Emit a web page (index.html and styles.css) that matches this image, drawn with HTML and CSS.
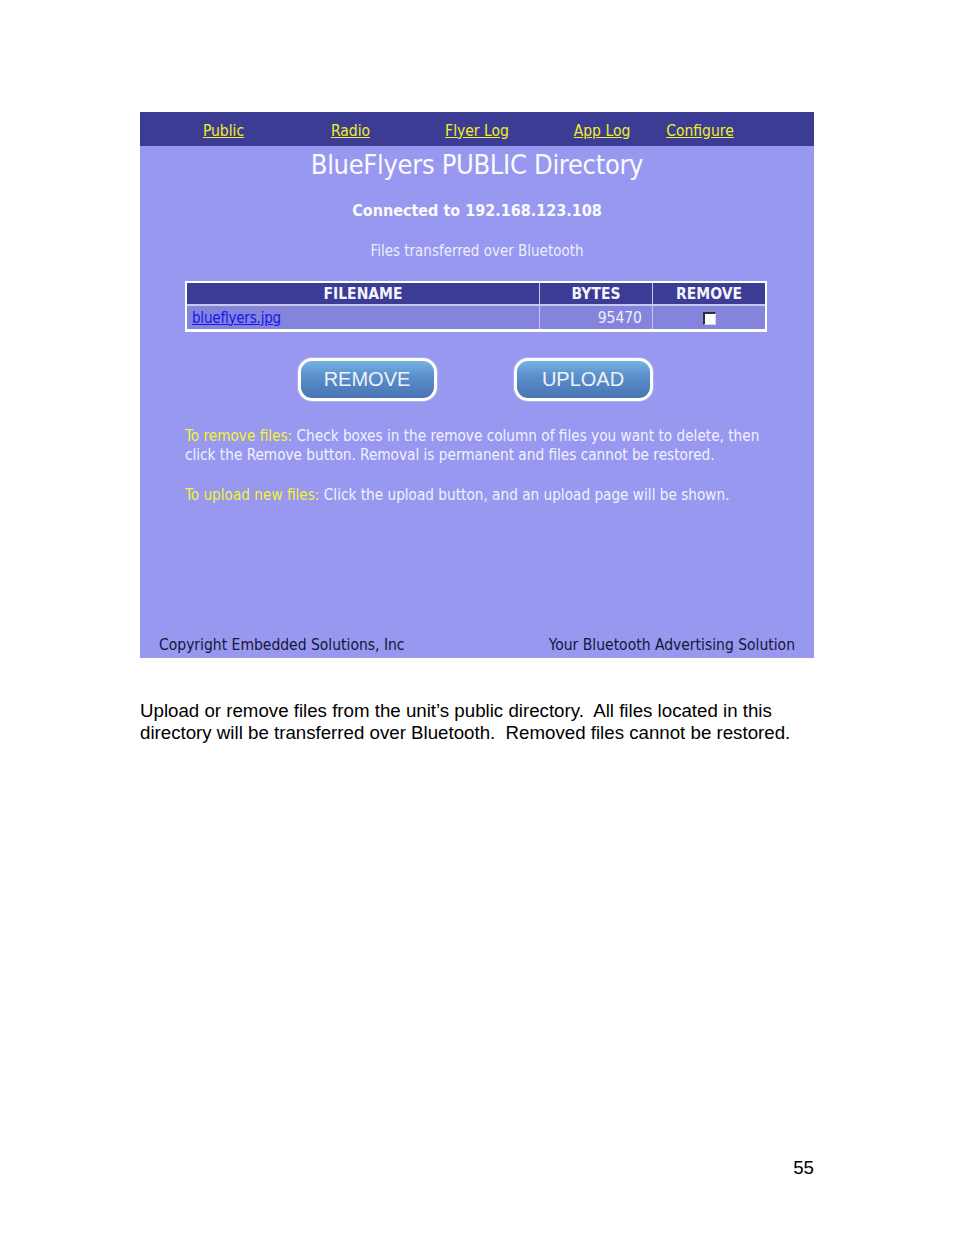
FILE: index.html
```html
<!DOCTYPE html>
<html>
<head>
<meta charset="utf-8">
<link rel="stylesheet" href="styles.css">
</head>
<body>
<div class="page">
  <div class="panel">
    <nav class="nav">
      <a href="#" class="nav-link">Public</a>
      <a href="#" class="nav-link">Radio</a>
      <a href="#" class="nav-link">Flyer Log</a>
      <a href="#" class="nav-link">App Log</a>
      <a href="#" class="nav-link">Configure</a>
    </nav>
    <h1 class="title">BlueFlyers PUBLIC Directory</h1>
    <div class="connected">Connected to 192.168.123.108</div>
    <div class="subtitle">Files transferred over Bluetooth</div>
    <table class="files">
      <colgroup>
        <col class="c-name">
        <col class="c-bytes">
        <col class="c-remove">
      </colgroup>
      <thead>
        <tr><th>FILENAME</th><th>BYTES</th><th>REMOVE</th></tr>
      </thead>
      <tbody>
        <tr>
          <td><a href="#" class="file-link">blueflyers.jpg</a></td>
          <td class="num">95470</td>
          <td class="center"><span class="check"></span></td>
        </tr>
      </tbody>
    </table>
    <div class="buttons">
      <button class="btn">REMOVE</button>
      <button class="btn">UPLOAD</button>
    </div>
    <p class="help"><span class="label">To remove files:</span> Check boxes in the remove column of files you want to delete, then click the Remove button. Removal is permanent and files cannot be restored.</p>
    <p class="help"><span class="label">To upload new files:</span> Click the upload button, and an upload page will be shown.</p>
    <div class="spacer"></div>
    <footer class="footer">
      <span>Copyright Embedded Solutions, Inc</span>
      <span>Your Bluetooth Advertising Solution</span>
    </footer>
  </div>
  <p class="desc">Upload or remove files from the unit’s public directory.&nbsp; All files located in this directory will be transferred over Bluetooth.&nbsp; Removed files cannot be restored.</p>
  <div class="pagenum">55</div>
</div>
</body>
</html>
```

FILE: styles.css
```css
html, body {
  margin: 0;
  padding: 0;
  background: #ffffff;
}

.page {
  width: 674px;
  margin-left: 140px;
  padding-top: 112px;
  display: flex;
  flex-direction: column;
}

.panel {
  background: #9898f0;
  height: 546px;
  display: flex;
  flex-direction: column;
  font-family: "DejaVu Sans Condensed", "DejaVu Sans", sans-serif;
  color: #f4f4ff;
}

.nav {
  background: #3c3c94;
  height: 34px;
  box-sizing: border-box;
  padding-top: 3px;
  display: grid;
  grid-template-columns: 127px 127px 126px 124px 72px;
  padding-left: 20px;
  align-items: center;
  justify-items: center;
}

.nav-link {
  color: #f0f020;
  font-size: 15.5px;
}

.title {
  margin: 2px 0 0 0;
  text-align: center;
  font-weight: normal;
  font-size: 27px;
  letter-spacing: -0.3px;
  line-height: 34px;
  color: #fbfbff;
}

.connected {
  text-align: center;
  font-weight: bold;
  font-size: 16px;
  margin-top: 20px;
  line-height: 18px;
  color: #fbfbff;
}

.subtitle {
  text-align: center;
  font-size: 15px;
  margin-top: 22px;
  line-height: 18px;
  color: #eeeeff;
}

.files {
  margin-top: 21px;
  margin-left: 45px;
  width: 582px;
  table-layout: fixed;
  border-collapse: separate;
  border-spacing: 0;
  border: 2px solid #ffffff;
  border-bottom-width: 3px;
  font-size: 15.5px;
}

.c-name { width: 352px; }
.c-bytes { width: 113px; }
.c-remove { width: 113px; }

.files th {
  background: #3c3c94;
  color: #f4f4ff;
  font-weight: bold;
  height: 21px;
  padding: 0;
  text-align: center;
  border-left: 1px solid #c8c8ee;
  border-bottom: 2px solid #c8c8ee;
}

.files td {
  background: #8484dc;
  height: 23px;
  padding: 0 5px;
  border-left: 1px solid #c8c8ee;
  color: #eeeeff;
}

.files th:first-child,
.files td:first-child {
  border-left: none;
}

.num { text-align: right; padding-right: 10px !important; }
.center { text-align: center; }

.file-link {
  color: #1616ee;
  font-size: 15px;
  letter-spacing: -0.2px;
}

.check {
  display: inline-block;
  box-sizing: border-box;
  width: 13px;
  height: 13px;
  background: #ffffff;
  border: 2px solid #303030;
  border-right: 1px solid #d8d8d8;
  border-bottom: 1px solid #d8d8d8;
  vertical-align: middle;
}

.buttons {
  display: flex;
  justify-content: center;
  gap: 77px;
  margin-top: 26px;
  padding-right: 4px;
}

.btn {
  width: 139px;
  height: 43px;
  border: 3px solid #ffffff;
  border-radius: 14px;
  background: linear-gradient(#78b4e2 0%, #5a90cc 40%, #4a74b4 100%);
  color: #eef2fa;
  font-family: "Liberation Sans", Arial, sans-serif;
  font-size: 20px;
  padding: 0;
  box-shadow: 0 0 0 1px #b0b0e8;
}

.help {
  margin: 26px 0 0 45px;
  width: 590px;
  font-size: 15.2px;
  line-height: 19px;
  color: #f2f2ff;
}

.help + .help {
  margin-top: 21px;
}

.label {
  color: #f4f430;
}

.spacer {
  flex: 1;
}

.footer {
  display: flex;
  justify-content: space-between;
  padding: 0 19px 3px 19px;
  font-size: 15.5px;
  color: #16163a;
  line-height: 19px;
}

.desc {
  margin: 42px 0 0 0;
  font-family: "Liberation Sans", Arial, sans-serif;
  font-size: 18.7px;
  line-height: 22px;
  color: #000000;
  width: 660px;
}

.pagenum {
  align-self: flex-end;
  margin-top: 413px;
  font-family: "Liberation Sans", Arial, sans-serif;
  font-size: 18.7px;
  color: #000000;
}
```
